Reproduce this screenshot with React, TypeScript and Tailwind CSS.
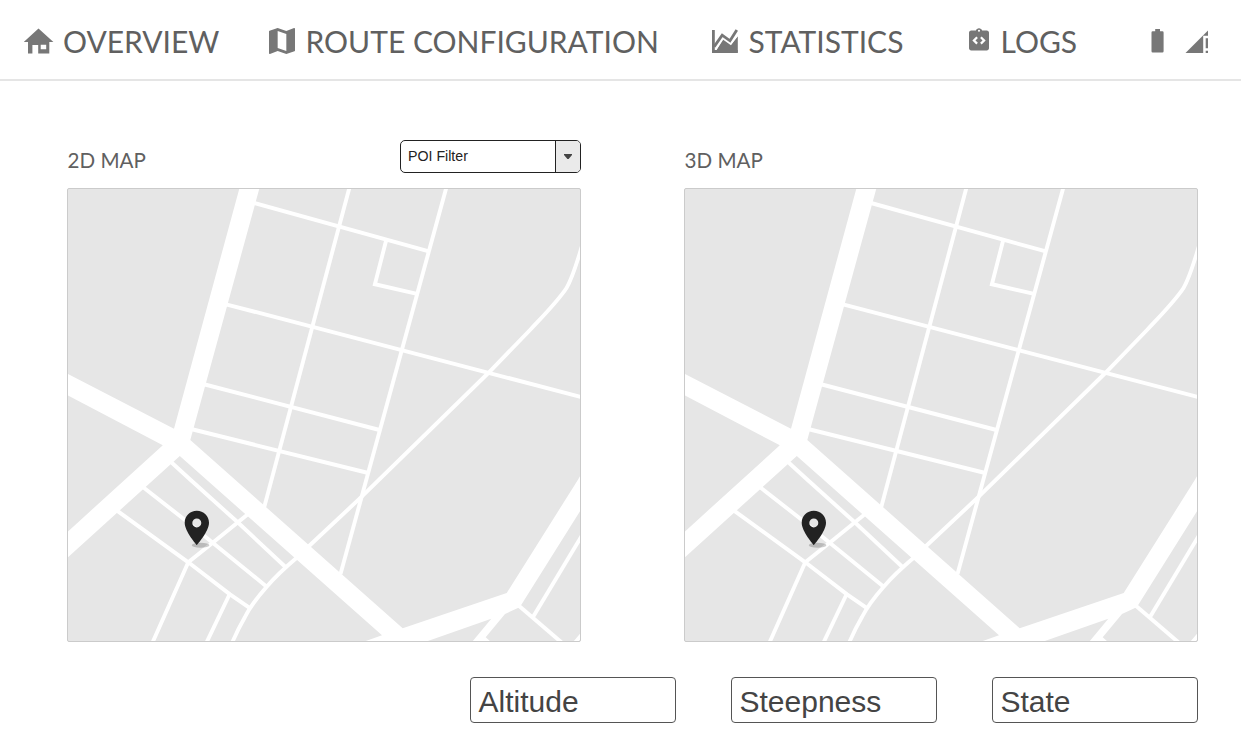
import type { ReactNode } from "react";

function HomeIcon() {
  return (
    <svg width="30" height="26" viewBox="24 28 30 26" fill="#777">
      <path
        fillRule="evenodd"
        d="M38.5 28.4 53.4 42H49.3V53.6H38.2V45H32.4V53.6H28V42H23.7ZM40.7 44.7V49.2H46.2V44.7Z"
      />
    </svg>
  );
}

function MapIcon() {
  return (
    <svg width="26" height="26" viewBox="3 3 18 18" fill="#777">
      <path d="M20.5 3l-.16.03L15 5.1 9 3 3.36 4.9c-.21.07-.36.25-.36.48V20.5c0 .28.22.5.5.5l.16-.03L9 18.9l6 2.1 5.64-1.9c.21-.07.36-.25.36-.48V3.5c0-.28-.22-.5-.5-.5zM15 19l-6-2.11V5l6 2.11V19z" />
    </svg>
  );
}

function ChartIcon() {
  return (
    <svg width="26" height="24" viewBox="712 29 26 24" fill="none">
      <path d="M713.4 30V51.5H737.7" stroke="#777" strokeWidth="2.8" />
      <path d="M715.5 51.5 723.3 38.6 731 44.4 737.8 36.3V52.8H712V51.5Z" fill="#777" />
      <path d="M715.8 49.5 723 38.6 730.8 44.2 738 34.5" stroke="#fff" strokeWidth="1.6" />
      <path d="M714.2 46.6 722.2 35.2 730 40.8 736.8 30" stroke="#777" strokeWidth="2.8" />
    </svg>
  );
}

function LogsIcon() {
  return (
    <svg className="mb-[3px]" width="20" height="23" viewBox="3 0.8 18 20.7" fill="#777">
      <path
        fillRule="evenodd"
        d="M19 3h-4.18C14.4 1.84 13.3 1 12 1s-2.4.84-2.82 2H5c-1.1 0-2 .9-2 2v14c0 1.1.9 2 2 2h14c1.1 0 2-.9 2-2V5c0-1.1-.9-2-2-2zM11 14.17l-1.41 1.42L6 12l3.59-3.59L11 9.83 8.83 12zM12 4.25a.95.95 0 1 1 0-1.9.95.95 0 0 1 0 1.9zM14.41 15.59 13 14.17 15.17 12 13 9.83l1.41-1.42L18 12z"
      />
    </svg>
  );
}

function BatteryIcon() {
  return (
    <svg width="13" height="24" viewBox="1151 29 13 24" fill="#777">
      <path d="M1155.2 29H1160V31.2H1162.4Q1163.6 31.2 1163.6 32.4V51.2Q1163.6 52.4 1162.4 52.4H1152.7Q1151.5 52.4 1151.5 51.2V32.4Q1151.5 31.2 1152.7 31.2H1155.2Z" />
    </svg>
  );
}

function SignalIcon() {
  return (
    <svg className="mt-px" width="24" height="24" viewBox="1185 30 24 24" fill="#777">
      <path d="M1185.5 53 1208 30.6V35.8H1203.2V53ZM1205.7 38.2H1208V48.3H1205.7ZM1205.7 50.7H1208V53H1205.7Z" />
    </svg>
  );
}

function NavItem({ icon, label, className }: { icon: ReactNode; label: string; className: string }) {
  return (
    <a className={`flex shrink-0 items-center whitespace-nowrap ${className}`}>
      {icon}
      <span>{label}</span>
    </a>
  );
}

const minorRoads = [
  "M254 203 428 251.2",
  "M349.6 187 264 508",
  "M446.5 187 340.5 574",
  "M386 241 374.9 284.2 417 293.8",
  "M226 304.3 582 397.2",
  "M203 384 379.5 430",
  "M191 429 368.3 473",
  "M582 246C577 262 573 277 566.5 288C558 301 545 314 530 330L488.3 373 361.7 496.7 308 547",
  "M297 557.5C287 566 275 577 266.7 586.7C255 600 250 607 245 617Q238 629 232 643",
  "M117 510.7 188.3 562.3 230 594.3 250.3 608.3",
  "M143.5 487.5 185 520 212.7 542.7 266.7 586.7",
  "M171 462 190.7 480 237.7 522.3 286 567.5",
  "M247.5 514.5 212.7 542.7 188.3 562.3 152.3 643",
  "M229.7 594 206.3 643",
  "M518 605 562 642.8",
  "M533.3 616.5 582 535.5",
  "M573 645 585 631",
];

function CityMap() {
  return (
    <div className="h-[454px] w-[514px] overflow-hidden rounded-[2px] border border-[#cbcbcb] bg-[#e6e6e6]">
      <svg className="block" width="512" height="452" viewBox="68 189 512 452">
        <g fill="none" stroke="#fff" strokeWidth="3.9">
          {minorRoads.map((d) => (
            <path key={d} d={d} />
          ))}
        </g>
        <path
          fill="#fff"
          d="M239.5 188H259.5L190.3 440 402.7 628.3 506.7 593 577.5 480.5 582 473V508L521 605.3 518.5 607.7 505 614 485.7 637.3 491 642H472L491.3 618.7 425 642H363L382 635.3 179.8 456 66 559V533.2L162.8 445.3 66 394.5V373L174 428.7Z"
        />
        <ellipse cx="200.6" cy="545.2" rx="8.8" ry="2.5" fill="#222" fillOpacity="0.22" />
        <path
          fill="#222"
          fillRule="evenodd"
          d="M196.8 510.7C190 510.7 184.7 515.9 184.7 522.7C184.7 531.4 196.8 545 196.8 545C196.8 545 209 531.4 209 522.7C209 515.9 203.6 510.7 196.8 510.7ZM196.8 518.4A4.5 4.5 0 1 1 196.8 527.4A4.5 4.5 0 1 1 196.8 518.4Z"
        />
      </svg>
    </div>
  );
}

function PoiFilter() {
  return (
    <button className="flex h-[33px] w-[181px] overflow-hidden rounded-[5px] border border-[#222] bg-white text-left font-['Liberation_Sans',Arial,sans-serif] text-[14.2px] text-[#222]">
      <span className="flex-1 pl-[7px] leading-[30px]">POI Filter</span>
      <span className="flex h-full w-[25px] items-center justify-center border-l border-[#222] bg-[#eaeaea]">
        <svg width="8" height="5" viewBox="0 0 8 5" fill="#444">
          <path d="M0 0H8V1L4.6 5H3.4L0 1Z" />
        </svg>
      </span>
    </button>
  );
}

function MapPanel({ title, filter }: { title: string; filter?: ReactNode }) {
  return (
    <section className="w-[514px]">
      <div className="flex h-12 items-start justify-between">
        <h2 className="pt-[5px] pl-[0.6px] text-[20.6px] leading-[30px]">{title}</h2>
        {filter}
      </div>
      <CityMap />
    </section>
  );
}

function Readout({ label }: { label: string }) {
  return (
    <div className="h-[46px] w-[206px] rounded-[4px] border border-[#555] bg-white pl-[7.5px] font-['Liberation_Sans',Arial,sans-serif] text-[30px] leading-[47px] text-[#444]">
      {label}
    </div>
  );
}

export default function App() {
  return (
    <div className="h-[750px] w-[1243px] overflow-hidden bg-white font-[Lato,sans-serif] text-[#606060]">
      <header className="flex h-[81px] w-[1241px] items-center border-b-2 border-[#e5e5e5] pt-[3px] pl-6 text-[30px] leading-[41px]">
        <NavItem className="w-[245px] gap-[9px]" icon={<HomeIcon />} label="OVERVIEW" />
        <NavItem className="w-[443px] gap-[10.5px]" icon={<MapIcon />} label="ROUTE CONFIGURATION" />
        <NavItem className="w-[257px] gap-[10.5px]" icon={<ChartIcon />} label="STATISTICS" />
        <NavItem className="w-[182px] gap-[11.5px]" icon={<LogsIcon />} label="LOGS" />
        <div className="flex items-center gap-[21px]">
          <BatteryIcon />
          <SignalIcon />
        </div>
      </header>
      <main className="pt-[59px] pl-[67px]">
        <div className="flex gap-[103px]">
          <MapPanel title="2D MAP" filter={<PoiFilter />} />
          <MapPanel title="3D MAP" />
        </div>
        <div className="flex gap-[55px] pt-[35px] pl-[403px]">
          <Readout label="Altitude" />
          <Readout label="Steepness" />
          <Readout label="State" />
        </div>
      </main>
    </div>
  );
}
